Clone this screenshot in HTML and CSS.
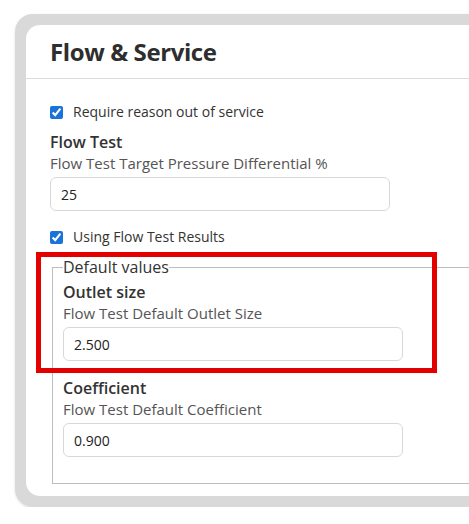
FILE: index.html
```html
<!DOCTYPE html>
<html>
<head>
<meta charset="utf-8">
<link rel="stylesheet" href="styles.css">
</head>
<body>
<div class="frame">
  <div class="card">
    <div class="card-header">
      <h1 class="title">Flow &amp; Service</h1>
    </div>
    <div class="card-body">
      <label class="check-row"><input type="checkbox" checked> <span>Require reason out of service</span></label>
      <div class="field first-field">
        <div class="field-label">Flow Test</div>
        <div class="field-desc">Flow Test Target Pressure Differential %</div>
        <input class="text-input" type="text" value="25">
      </div>
      <label class="check-row second-check"><input type="checkbox" checked> <span>Using Flow Test Results</span></label>
      <fieldset class="group">
        <legend class="group-legend">Default values</legend>
        <div class="field">
          <div class="field-label">Outlet size</div>
          <div class="field-desc">Flow Test Default Outlet Size</div>
          <input class="text-input" type="text" value="2.500">
        </div>
        <div class="field spaced">
          <div class="field-label">Coefficient</div>
          <div class="field-desc">Flow Test Default Coefficient</div>
          <input class="text-input" type="text" value="0.900">
        </div>
      </fieldset>
      <div class="highlight"></div>
    </div>
  </div>
</div>
</body>
</html>
```

FILE: styles.css
```css
html, body {
  margin: 0;
  padding: 0;
  overflow: hidden;
  background: #ffffff;
  font-family: "Open Sans", "Liberation Sans", sans-serif;
}

.frame {
  margin: 14px 0 0 15px;
  padding: 11px;
  width: 700px;
  background: #d9d9d9;
  border-radius: 18px;
  box-shadow: 0 1px 3px rgba(0, 0, 0, 0.12);
}

.card {
  background: #ffffff;
  border-radius: 14px;
}

.card-header {
  padding: 12px 24px;
  border-bottom: 1px solid #dcdcdc;
}

.title {
  margin: 0;
  font-size: 24px;
  line-height: 29px;
  font-weight: 700;
  letter-spacing: -0.4px;
  color: #2e2e2e;
}

.card-body {
  position: relative;
  padding: 23px 24px 12px 24px;
}

.check-row {
  display: flex;
  align-items: center;
  gap: 10px;
  height: 20px;
  font-size: 14px;
  line-height: 20px;
  color: #333333;
}

.check-row input {
  margin: 0;
  width: 13px;
  height: 13px;
  accent-color: #1a73d9;
}

.second-check {
  margin-top: 16px;
}

.first-field {
  margin-top: 9px;
}

.field {
  display: flex;
  flex-direction: column;
}

.field.spaced {
  margin-top: 16px;
}

.field-label {
  font-size: 16px;
  line-height: 22px;
  font-weight: 600;
  color: #333333;
}

.field-desc {
  font-size: 15px;
  line-height: 20px;
  color: #555555;
}

.text-input {
  box-sizing: border-box;
  margin-top: 4px;
  width: 340px;
  height: 34px;
  padding: 0 10px;
  border: 1px solid #d8d8d8;
  border-radius: 6px;
  font-family: inherit;
  font-size: 14px;
  color: #222222;
  background: #ffffff;
  outline: none;
}

.group {
  margin: 9px 0 0 2px;
  padding: 3px 10px 26px 10px;
  border: 1px solid #bdbdbd;
  border-right: none;
}

.group-legend {
  padding: 0;
  font-size: 16px;
  line-height: 22px;
  color: #333333;
}

.highlight {
  position: absolute;
  left: 10px;
  top: 173px;
  width: 391px;
  height: 111px;
  border: 5px solid #e30000;
}
```
